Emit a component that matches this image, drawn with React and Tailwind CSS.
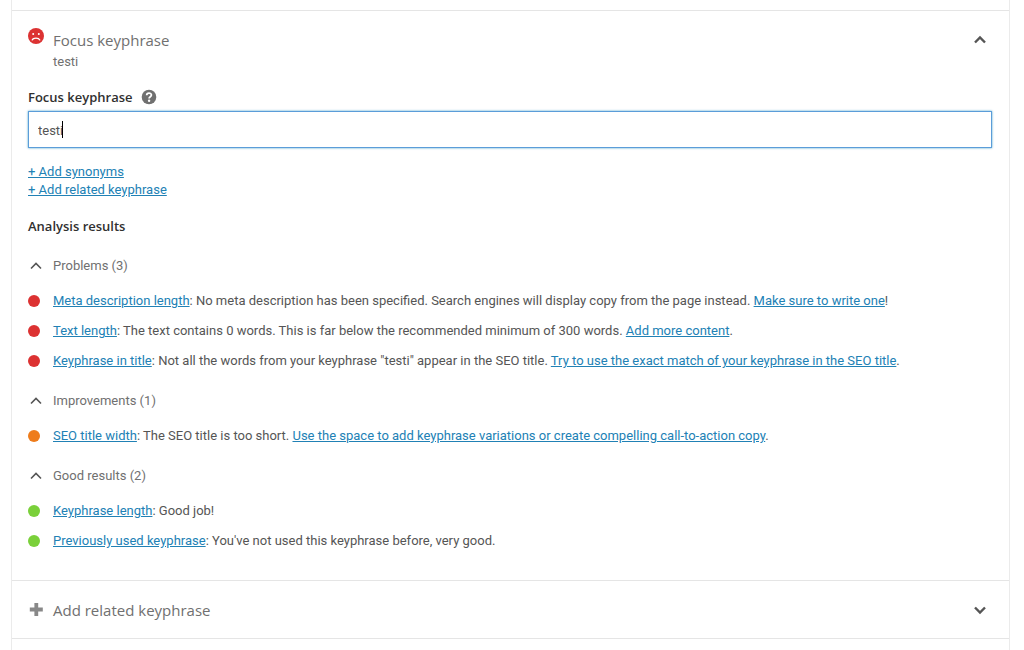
import { useState } from "react";

const GROUPS = [
    {
        title: "Problems",
        color: "bg-[#dc3232]",
        items: [
            {
                name: "Meta description length",
                text: "No meta description has been specified. Search engines will display copy from the page instead.",
                action: "Make sure to write one",
                end: "!",
            },
            {
                name: "Text length",
                text: "The text contains 0 words. This is far below the recommended minimum of 300 words.",
                action: "Add more content",
                end: ".",
            },
            {
                name: "Keyphrase in title",
                text: 'Not all the words from your keyphrase "testi" appear in the SEO title.',
                action: "Try to use the exact match of your keyphrase in the SEO title",
                end: ".",
            },
        ],
    },
    {
        title: "Improvements",
        color: "bg-[#ee7c1b]",
        items: [
            {
                name: "SEO title width",
                text: "The SEO title is too short.",
                action: "Use the space to add keyphrase variations or create compelling call-to-action copy",
                end: ".",
            },
        ],
    },
    {
        title: "Good results",
        color: "bg-[#7ad03a]",
        items: [
            { name: "Keyphrase length", text: "Good job!" },
            { name: "Previously used keyphrase", text: "You've not used this keyphrase before, very good." },
        ],
    },
];

const SadFace = () => (
    <svg className="w-4 h-4" viewBox="0 0 16 16" aria-hidden="true">
        <circle cx="8" cy="8" r="8" fill="#dc3232" />
        <circle cx="5.2" cy="6" r="1" fill="#fff" />
        <circle cx="10.8" cy="6" r="1" fill="#fff" />
        <path d="M4.2 12C5.2 9.4 10.8 9.4 11.8 12" fill="none" stroke="#fff" strokeWidth="1.2" strokeLinecap="round" />
    </svg>
);

const HelpIcon = () => (
    <svg className="w-4 h-4" viewBox="0 0 16 16" aria-hidden="true">
        <circle cx="8" cy="8" r="7.3" fill="#707070" />
        <path d="M5.7 6.3C5.7 3.4 10.4 3.5 10.4 6.1C10.4 7.7 8.1 7.7 8.1 9.4" fill="none" stroke="#fff" strokeWidth="1.8" />
        <circle cx="8.1" cy="11.8" r="1.2" fill="#fff" />
    </svg>
);

const PlusIcon = () => (
    <svg className="w-4 h-4" viewBox="0 0 16 16" aria-hidden="true">
        <path d="M8.3 1V14M1.8 7.5H14.8" stroke="#888" strokeWidth="3.8" />
    </svg>
);

const Chevron = ({ up, thin }) => (
    <svg className="w-4 h-4" viewBox="0 0 16 16" aria-hidden="true">
        <path
            d={up ? "M3 10.5L8 5.5L13 10.5" : "M3 5.5L8 10.5L13 5.5"}
            fill="none"
            stroke="#555"
            strokeWidth={thin ? 1.6 : 2.4}
        />
    </svg>
);

const TextLink = ({ children }) => (
    <a href="#" className="text-[#2181b5] underline">
        {children}
    </a>
);

const ResultItem = ({ item, color }) => (
    <li className="flex min-h-[30px] items-center">
        <span className={`mr-[13px] h-3 w-3 shrink-0 rounded-full ${color}`} />
        <p>
            <TextLink>{item.name}</TextLink>: {item.text}
            {item.action && (
                <>
                    {" "}
                    <TextLink>{item.action}</TextLink>
                    {item.end}
                </>
            )}
        </p>
    </li>
);

const ResultGroup = ({ group }) => {
    const [open, setOpen] = useState(true);
    return (
        <div>
            <button
                type="button"
                aria-expanded={open}
                onClick={() => setOpen(!open)}
                className="flex h-[45px] w-full items-center gap-[9px] pt-1 text-left text-[#707070]"
            >
                <Chevron up={open} thin />
                {group.title} ({group.items.length})
            </button>
            {open && (
                <ul>
                    {group.items.map((item) => (
                        <ResultItem key={item.name} item={item} color={group.color} />
                    ))}
                </ul>
            )}
        </div>
    );
};

export default function App() {
    const [keyphrase, setKeyphrase] = useState("testi");

    return (
        <div className="min-h-screen bg-white font-['Roboto',sans-serif] text-[13px] leading-[18px] text-[#555]">
            <div className="ml-[11px] mr-[14px] flex min-h-screen flex-col border-x border-[#ebebeb] pt-[10px]">
                {/* Focus keyphrase */}
                <section className="border-t border-[#e5e5e5] pb-6 pl-4 pr-[17px]">
                    <button type="button" className="flex w-full items-start gap-[9px] pt-[17px] text-left text-[#707070]">
                        <SadFace />
                        <span className="flex-1">
                            <span className="block font-['Open_Sans',sans-serif] text-[15px] leading-6">Focus keyphrase</span>
                            <span className="block leading-5">testi</span>
                        </span>
                        <span className="mr-1 mt-1">
                            <Chevron up />
                        </span>
                    </button>

                    <div className="mt-4 flex items-center gap-2">
                        <label htmlFor="keyphrase" className="font-['Open_Sans',sans-serif] font-semibold text-[#303030]">
                            Focus keyphrase
                        </label>
                        <button type="button" aria-label="Help">
                            <HelpIcon />
                        </button>
                    </div>
                    <div className="relative mt-[5px]">
                        <input
                            id="keyphrase"
                            type="text"
                            value={keyphrase}
                            onChange={(e) => setKeyphrase(e.target.value)}
                            className="block h-[37px] w-full border border-[#5b9dd9] px-[9px] pt-px caret-transparent shadow-[0_0_2px_rgba(30,140,190,0.8)] outline-none"
                        />
                        {/* Caret, placed after a hidden copy of the value */}
                        <span className="pointer-events-none absolute inset-y-0 left-[9px] flex items-center" aria-hidden="true">
                            <span className="invisible whitespace-pre">{keyphrase}</span>
                            <span className="h-[17px] w-px bg-black" />
                        </span>
                    </div>

                    <div className="mt-[15px] flex flex-col items-start">
                        <TextLink>+ Add synonyms</TextLink>
                        <TextLink>+ Add related keyphrase</TextLink>
                    </div>

                    <h2 className="mt-[18px] font-['Open_Sans',sans-serif] font-semibold text-[#303030]">Analysis results</h2>
                    <div className="mt-[6px]">
                        {GROUPS.map((group) => (
                            <ResultGroup key={group.title} group={group} />
                        ))}
                    </div>
                </section>

                {/* Add related keyphrase */}
                <section className="border-y border-[#e5e5e5] pl-4 pr-[17px]">
                    <button type="button" className="flex h-[57px] w-full items-center gap-[9px] text-left text-[#707070]">
                        <PlusIcon />
                        <span className="flex-1 font-['Open_Sans',sans-serif] text-[15px] leading-6">Add related keyphrase</span>
                        <span className="mr-1">
                            <Chevron />
                        </span>
                    </button>
                </section>
            </div>
        </div>
    );
}
